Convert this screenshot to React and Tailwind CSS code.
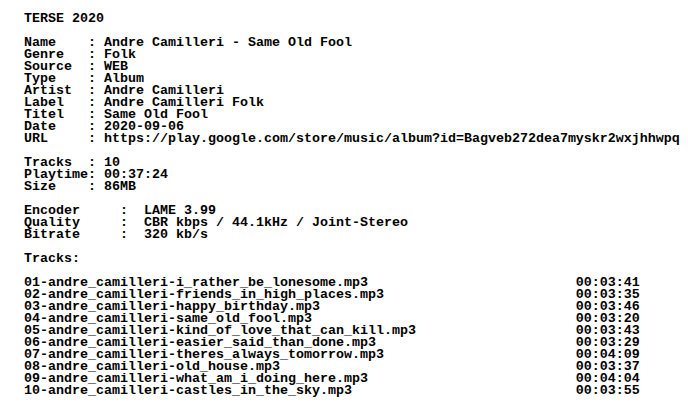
export default function App() {
  const tracks = [
    ["01-andre_camilleri-i_rather_be_lonesome.mp3", "00:03:41"],
    ["02-andre_camilleri-friends_in_high_places.mp3", "00:03:35"],
    ["03-andre_camilleri-happy_birthday.mp3", "00:03:46"],
    ["04-andre_camilleri-same_old_fool.mp3", "00:03:20"],
    ["05-andre_camilleri-kind_of_love_that_can_kill.mp3", "00:03:43"],
    ["06-andre_camilleri-easier_said_than_done.mp3", "00:03:29"],
    ["07-andre_camilleri-theres_always_tomorrow.mp3", "00:04:09"],
    ["08-andre_camilleri-old_house.mp3", "00:03:37"],
    ["09-andre_camilleri-what_am_i_doing_here.mp3", "00:04:04"],
    ["10-andre_camilleri-castles_in_the_sky.mp3", "00:03:55"],
  ];
  const text = [
    "TERSE 2020",
    "",
    "Name    : Andre Camilleri - Same Old Fool",
    "Genre   : Folk",
    "Source  : WEB",
    "Type    : Album",
    "Artist  : Andre Camilleri",
    "Label   : Andre Camilleri Folk",
    "Titel   : Same Old Fool",
    "Date    : 2020-09-06",
    "URL     : https://play.google.com/store/music/album?id=Bagveb272dea7myskr2wxjhhwpq",
    "",
    "Tracks  : 10",
    "Playtime: 00:37:24",
    "Size    : 86MB",
    "",
    "Encoder     :  LAME 3.99",
    "Quality     :  CBR kbps / 44.1kHz / Joint-Stereo",
    "Bitrate     :  320 kb/s",
    "",
    "Tracks:",
    "",
    ...tracks.map(([n, t]) => n.padEnd(69, " ") + t),
  ].join("\n");
  return (
    <div className="w-[688px] h-[408px] overflow-hidden bg-white">
      <pre className="pl-[24px] pt-[13px] m-0 whitespace-pre text-black font-bold text-[13.33px] leading-[12px] font-['Liberation_Mono',monospace]">
        {text}
      </pre>
    </div>
  );
}
